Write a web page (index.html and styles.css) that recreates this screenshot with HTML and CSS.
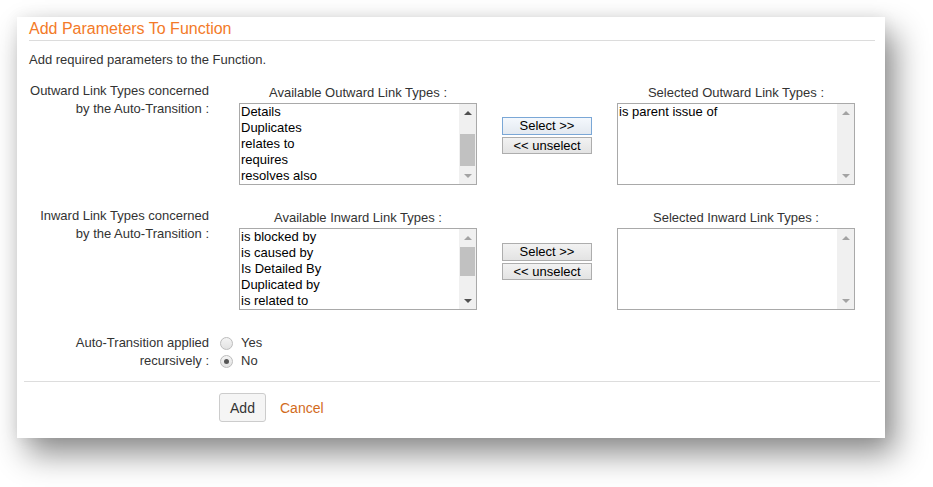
FILE: index.html
```html
<!DOCTYPE html>
<html lang="en">
<head>
<meta charset="utf-8">
<title>Add Parameters To Function</title>
<link rel="stylesheet" href="styles.css">
</head>
<body>
<div class="dialog">
  <h2 class="dialog-title">Add Parameters To Function</h2>
  <p class="intro">Add required parameters to the Function.</p>

  <div class="link-row">
    <div class="field-label">Outward Link Types concerned<br>by the Auto-Transition :</div>
    <div class="list-col">
      <div class="list-head">Available Outward Link Types :</div>
      <div class="listbox">
        <div class="items">
          <div>Details</div>
          <div>Duplicates</div>
          <div>relates to</div>
          <div>requires</div>
          <div>resolves also</div>
        </div>
        <div class="sbar">
          <span class="arrow up"></span>
          <span class="track"><span class="thumb thumb-outward"></span></span>
          <span class="arrow down off"></span>
        </div>
      </div>
    </div>
    <div class="btn-col">
      <button class="move-btn focused">Select &gt;&gt;</button>
      <button class="move-btn">&lt;&lt; unselect</button>
    </div>
    <div class="list-col">
      <div class="list-head">Selected Outward Link Types :</div>
      <div class="listbox">
        <div class="items">
          <div>is parent issue of</div>
        </div>
        <div class="sbar">
          <span class="arrow up off"></span>
          <span class="track"></span>
          <span class="arrow down off"></span>
        </div>
      </div>
    </div>
  </div>

  <div class="link-row inward">
    <div class="field-label">Inward Link Types concerned<br>by the Auto-Transition :</div>
    <div class="list-col">
      <div class="list-head">Available Inward Link Types :</div>
      <div class="listbox">
        <div class="items">
          <div>is blocked by</div>
          <div>is caused by</div>
          <div>Is Detailed By</div>
          <div>Duplicated by</div>
          <div>is related to</div>
        </div>
        <div class="sbar">
          <span class="arrow up off"></span>
          <span class="track"><span class="thumb thumb-inward"></span></span>
          <span class="arrow down"></span>
        </div>
      </div>
    </div>
    <div class="btn-col">
      <button class="move-btn">Select &gt;&gt;</button>
      <button class="move-btn">&lt;&lt; unselect</button>
    </div>
    <div class="list-col">
      <div class="list-head">Selected Inward Link Types :</div>
      <div class="listbox">
        <div class="items"></div>
        <div class="sbar">
          <span class="arrow up off"></span>
          <span class="track"></span>
          <span class="arrow down off"></span>
        </div>
      </div>
    </div>
  </div>

  <div class="radio-row">
    <div class="field-label">Auto-Transition applied<br>recursively :</div>
    <div class="radios">
      <label class="radio"><span class="dot"></span>Yes</label>
      <label class="radio"><span class="dot checked"></span>No</label>
    </div>
  </div>

  <div class="actions">
    <button class="add-btn">Add</button>
    <a class="cancel" href="#">Cancel</a>
  </div>
</div>
</body>
</html>
```

FILE: styles.css
```css
* { box-sizing: border-box; }

html, body { min-height: 487px; }

body {
  margin: 0;
  background: #fff;
  font-family: "Liberation Sans", Arial, sans-serif;
  color: #333;
}

.dialog {
  margin: 17px 0 0 17px;
  width: 868px;
  height: 421px;
  background: #fff;
  padding: 0 10px 0 12px;
  box-shadow: 10px 16px 30px rgba(0, 0, 0, 0.45), 0 0 14px rgba(0, 0, 0, 0.07);
}

.dialog-title {
  margin: 0;
  padding-top: 1px;
  font-size: 16px;
  font-weight: normal;
  line-height: 21px;
  color: #f37a28;
  border-bottom: 1px solid #dcdcdc;
  height: 24px;
}

.intro {
  margin: 11px 0 0;
  font-size: 13px;
  line-height: 16px;
}

/* label | available list | move buttons | selected list */
.link-row {
  display: grid;
  grid-template-columns: 185px 238px 90px 238px;
  column-gap: 25px;
  margin-top: 14px;
}

.link-row.inward { margin-top: 22px; }

.field-label {
  text-align: right;
  font-size: 13px;
  line-height: 18px;
  padding-right: 5px;
}

.list-col {
  display: flex;
  flex-direction: column;
}

.list-head {
  text-align: center;
  font-size: 13px;
  line-height: 16px;
  padding-top: 3px;
  margin-bottom: 2px;
}

.listbox {
  display: flex;
  height: 82px;
  border: 1px solid #a9a9a9;
  background: #fff;
}

.items {
  flex: 1;
  font-size: 13px;
  line-height: 16px;
  color: #000;
  padding-left: 1px;
}

.sbar {
  width: 17px;
  display: flex;
  flex-direction: column;
  background: #f0f0f0;
}

.arrow {
  height: 17px;
  display: flex;
  align-items: center;
  justify-content: center;
}

.arrow::before {
  content: "";
  border-left: 4px solid transparent;
  border-right: 4px solid transparent;
}

.arrow.up::before { border-bottom: 4px solid #505050; }
.arrow.down::before { border-top: 4px solid #505050; }
.arrow.up.off::before { border-bottom-color: #a3a3a3; }
.arrow.down.off::before { border-top-color: #a3a3a3; }

.track {
  flex: 1;
  display: flex;
  flex-direction: column;
  padding: 0 1px;
}

.thumb {
  background: #c1c1c1;
  display: block;
}

.thumb-outward { margin-top: 13px; height: 32px; }
.thumb-inward { margin-top: 1px; height: 29px; }

.btn-col {
  display: flex;
  flex-direction: column;
  gap: 2px;
  padding-top: 35px;
}

.inward .btn-col { padding-top: 36px; }

.move-btn {
  font-family: "Liberation Sans", Arial, sans-serif;
  font-size: 13px;
  color: #000;
  height: 18px;
  line-height: 14px;
  padding: 0;
  border: 1px solid #adadad;
  background: linear-gradient(#f2f2f2, #e3e3e3);
}

.move-btn + .move-btn { height: 17px; }

.move-btn.focused {
  border-color: #7aa7d6;
  background: linear-gradient(#f4f8fd, #e3e9f0);
}

.radio-row {
  display: flex;
  margin-top: 24px;
}

.radio-row .field-label { width: 185px; }

.radios {
  margin-left: 6px;
  display: flex;
  flex-direction: column;
}

.radio {
  display: flex;
  align-items: center;
  font-size: 13px;
  line-height: 18px;
}

.dot {
  width: 13px;
  height: 13px;
  border-radius: 50%;
  border: 1px solid #bcbcbc;
  background: linear-gradient(#f4f4f4, #e2e2e2);
  margin-right: 8px;
  display: flex;
  align-items: center;
  justify-content: center;
}

.dot.checked::after {
  content: "";
  width: 5px;
  height: 5px;
  border-radius: 50%;
  background: #555;
}

.actions {
  margin: 11px 0 0 -5px;
  border-top: 1px solid #dddddd;
  width: 856px;
  padding: 11px 0 0 195px;
  display: flex;
  align-items: center;
  gap: 14px;
}

.add-btn {
  font-family: "Liberation Sans", Arial, sans-serif;
  font-size: 14px;
  color: #333;
  width: 47px;
  height: 29px;
  padding: 0;
  background: #f5f5f5;
  border: 1px solid #cccccc;
  border-radius: 3px;
}

.cancel {
  font-size: 14px;
  color: #d26b1c;
  text-decoration: none;
}
```
